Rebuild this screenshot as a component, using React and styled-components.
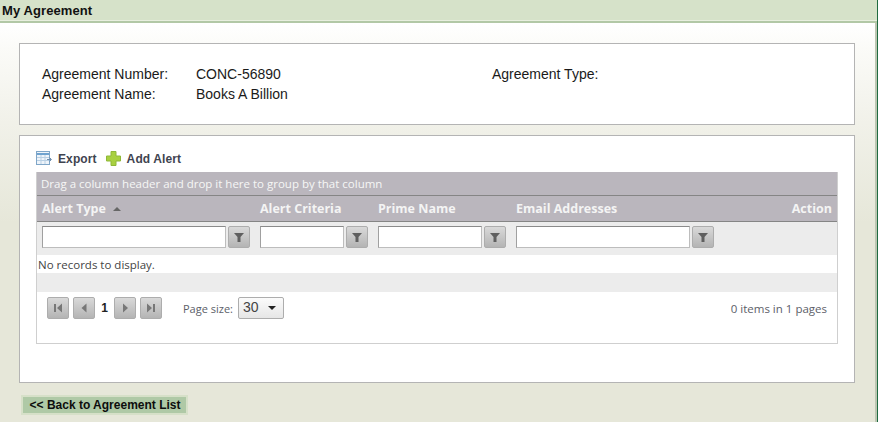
import React from "react";
import styled, { createGlobalStyle } from "styled-components";

const Global = createGlobalStyle`
  html, body { margin: 0; padding: 0; width: 100%; height: 100%; overflow: hidden; }
  #root { height: 100%; }
  * { box-sizing: border-box; }
`;

const Page = styled.div`
  width: 878px;
  height: 422px;
  display: flex;
  flex-direction: column;
  font-family: "Liberation Sans", Arial, sans-serif;
  background: #e6e7d9;
  border-right: 1px solid #1f6b40;
  overflow: hidden;
`;
const TitleBar = styled.div`
  height: 23px;
  flex: none;
  background: #d6e2c9;
  border-bottom: 2px solid #b2c8a6;
  box-shadow: inset 0 -1px 0 #e8efdf;
  font-size: 13px;
  font-weight: bold;
  letter-spacing: 0.1px;
  color: #111;
  line-height: 21px;
  padding-left: 2px;
`;
const Body = styled.div`
  flex: 1;
  display: flex;
  flex-direction: column;
  padding: 20px 20px 0 19px;
  border-right: 2px solid #bcc6b2;
  background: linear-gradient(#ffffff 0, #fbfbf8 25px, #f1f1e9 100px, #e6e7d9 200px, #e6e7d9 100%);
`;
const Panel = styled.div`
  background: #fff;
  border: 1px solid #b4b4b4;
`;
const InfoPanel = styled(Panel)`
  height: 82px;
  padding: 20px 22px 0;
  display: grid;
  grid-template-columns: 154px 296px 1fr;
  grid-auto-rows: 20px;
  font-size: 14px;
  line-height: 20px;
  color: #1a1a1a;
`;
const GridPanel = styled(Panel)`
  margin-top: 10px;
  height: 248px;
  padding: 12px 16px 0;
`;
const Toolbar = styled.div`
  height: 24px;
  padding-bottom: 3px;
  display: flex;
  align-items: center;
  font-size: 12px;
  font-weight: bold;
  color: #3f4450;
`;
const ToolItem = styled.span`
  display: inline-flex;
  align-items: center;
  gap: ${(p) => p.$gap}px;
  margin-right: 9px;
  letter-spacing: 0.1px;
`;
const Grid = styled.div`
  height: 172px;
  border: 1px solid #cfcfcf;
  border-top: 0;
  font-family: "Open Sans", "Liberation Sans", sans-serif;
`;
const GroupBar = styled.div`
  height: 24px;
  background: #bab6bd;
  color: #f6f6f6;
  font-size: 11.5px;
  line-height: 24px;
  padding-left: 4px;
  border-bottom: 1px solid #858585;
`;
const Columns = `
  display: grid;
  grid-template-columns: 218px 118px 138px 1fr auto;
`;
const HeaderRow = styled.div`
  ${Columns}
  height: 26px;
  background: #bab6bd;
  border-bottom: 1px solid #858585;
  color: #f4f4f4;
  font-size: 12.5px;
  font-weight: bold;
  line-height: 26px;
  padding: 0 5px;
`;
const HeadCell = styled.span`
  display: flex;
  align-items: center;
  gap: 7px;
`;
const SortUp = styled.i`
  width: 0;
  height: 0;
  border-left: 4px solid transparent;
  border-right: 4px solid transparent;
  border-bottom: 4px solid #666;
`;
const FilterRow = styled.div`
  ${Columns}
  height: 33px;
  background: #ececec;
  padding: 4px 5px 0;
`;
const FilterCell = styled.div`
  display: flex;
  gap: 2px;
`;
const FilterInput = styled.input`
  width: ${(p) => p.$w}px;
  height: 22px;
  background: #fff;
  border: 1px solid #bdbdbd;
  border-top-color: #8a8a8a;
  border-left-color: #a0a0a0;
  padding: 0;
`;
const SquareButton = styled.span`
  width: 22px;
  height: 22px;
  display: inline-flex;
  align-items: center;
  justify-content: center;
  flex: none;
  border: 1px solid #adadad;
  border-radius: 2px;
  background: linear-gradient(#d9d9d9, #b4b4b4);
`;
const NoRecords = styled.div`
  height: 18px;
  background: #fff;
  font-size: 11.5px;
  line-height: 20px;
  color: #444;
  padding-left: 1px;
`;
const Stripe = styled.div`
  height: 19px;
  background: #ececec;
`;
const Pager = styled.div`
  height: 50px;
  display: flex;
  align-items: flex-start;
  padding: 5px 10px 0;
  color: #5c6068;
  font-size: 11.5px;
`;
const PagerGroup = styled.div`
  display: flex;
  align-items: center;
  gap: 4px;
`;
const PageNum = styled.b`
  width: 11px;
  text-align: center;
  color: #222;
  font: bold 12px "Liberation Sans", Arial, sans-serif;
`;
const SizeLabel = styled.span`
  margin-left: 17px;
  margin-right: 1px;
  font-size: 11px;
`;
const SizeSelect = styled.span`
  width: 46px;
  height: 22px;
  border: 1px solid #adadad;
  border-radius: 2px;
  background: linear-gradient(#fbfbfb, #e6e6e6);
  display: flex;
  align-items: center;
  justify-content: space-between;
  padding: 0 7px 3px 4px;
  font: 14px "Liberation Sans", Arial, sans-serif;
  color: #444;
`;
const Caret = styled.i`
  width: 0;
  height: 0;
  margin-top: 3px;
  border-left: 4px solid transparent;
  border-right: 4px solid transparent;
  border-top: 4px solid #222;
`;
const ItemsInfo = styled.span`
  margin-left: auto;
  line-height: 24px;
`;
const BackWrap = styled.div`
  margin-top: 12px;
  margin-left: 2px;
`;
const BackButton = styled.button`
  display: block;
  height: 20px;
  width: 167px;
  padding: 0 0 0 1px;
  border: 2px solid #d6e0c8;
  background: #afc9a6;
  color: #0d0d0d;
  font: bold 12px "Liberation Sans", Arial, sans-serif;
  text-align: center;
`;

const Filter = () => (
  <svg width="14" height="14" viewBox="0 0 14 14"><path d="M2 3h10L8.5 7v5h-3V7z" fill="#5f5f5f" /></svg>
);
const Arrow = ({ d }) => (
  <svg width="12" height="14" viewBox="0 0 12 14"><path d={d} fill="#777" /></svg>
);
const ExportIcon = () => (
  <svg width="17" height="15" viewBox="0 0 17 15">
    <rect x="0.5" y="0.5" width="13" height="13" fill="#eef4fa" stroke="#7fa6c8" />
    <path d="M1 3h12" stroke="#6fa3cf" strokeWidth="2" />
    <path d="M1 6.5h12M1 9.5h12M5 4v9M9 4v9" stroke="#b9d0e4" />
    <path d="M11 8.5h4M13.5 6.5l2 2-2 2" stroke="#6f8fae" fill="none" />
  </svg>
);
const PlusIcon = () => (
  <svg width="15" height="15" viewBox="0 0 15 15">
    <path d="M5 .5h5v4.5h4.5v5H10v4.5H5V10H.5V5H5z" fill="#a8d040" stroke="#8fb838" />
  </svg>
);

const filters = [184, 84, 104, 174];

export default function App() {
  return (
    <Page>
      <Global />
      <TitleBar>My Agreement</TitleBar>
      <Body>
        <InfoPanel>
          <span>Agreement Number:</span>
          <span>CONC-56890</span>
          <span>Agreement Type:</span>
          <span>Agreement Name:</span>
          <span>Books A Billion</span>
        </InfoPanel>
        <GridPanel>
          <Toolbar>
            <ToolItem $gap={5}><ExportIcon />Export</ToolItem>
            <ToolItem $gap={6}><PlusIcon />Add Alert</ToolItem>
          </Toolbar>
          <Grid>
            <GroupBar>Drag a column header and drop it here to group by that column</GroupBar>
            <HeaderRow>
              <HeadCell>Alert Type <SortUp /></HeadCell>
              <HeadCell>Alert Criteria</HeadCell>
              <HeadCell>Prime Name</HeadCell>
              <HeadCell>Email Addresses</HeadCell>
              <HeadCell>Action</HeadCell>
            </HeaderRow>
            <FilterRow>
              {filters.map((w) => (
                <FilterCell key={w}>
                  <FilterInput $w={w} aria-label="filter" />
                  <SquareButton><Filter /></SquareButton>
                </FilterCell>
              ))}
            </FilterRow>
            <NoRecords>No records to display.</NoRecords>
            <Stripe />
            <Pager>
              <PagerGroup>
                <SquareButton><Arrow d="M2 3h2v8H2zM10 2.5v9L5 7z" /></SquareButton>
                <SquareButton><Arrow d="M8.5 2.5v9L3.5 7z" /></SquareButton>
                <PageNum>1</PageNum>
                <SquareButton><Arrow d="M4 2.5v9L9 7z" /></SquareButton>
                <SquareButton><Arrow d="M8 3h2v8H8zM2 2.5v9L7 7z" /></SquareButton>
                <SizeLabel>Page size:</SizeLabel>
                <SizeSelect>30<Caret /></SizeSelect>
              </PagerGroup>
              <ItemsInfo>0 items in 1 pages</ItemsInfo>
            </Pager>
          </Grid>
        </GridPanel>
        <BackWrap><BackButton>&lt;&lt; Back to Agreement List</BackButton></BackWrap>
      </Body>
    </Page>
  );
}
